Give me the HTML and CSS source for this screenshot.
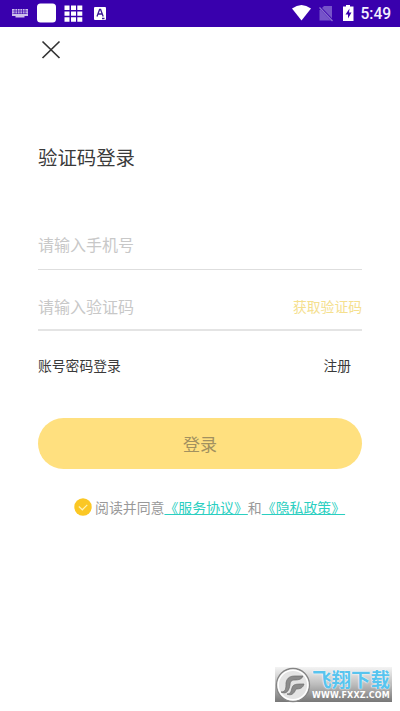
FILE: index.html
```html
<!DOCTYPE html>
<html lang="zh-CN">
<head>
<meta charset="utf-8">
<title>验证码登录</title>
<link rel="stylesheet" href="styles.css">
</head>
<body>
<header class="status">
  <svg class="status-left" width="120" height="26" viewBox="0 0 120 26" fill="#fff">
    <path opacity=".75" d="M12 9h16v7h-3.500v1.500h-9V16H12z"/>
    <path d="M12.500 11h15M12.500 13.300h15M15 9v5M17.500 9v5M20 9v5M22.500 9v5M25 9v5" stroke="#3b00b0" stroke-width=".7"/>
    <rect x="37" y="3.500" width="19" height="19" rx="3.500"/>
    <path d="M64.500 5.500h5v4.600h-5zM71 5.500h5v4.600h-5zM77.300 5.500h5v4.600h-5zM64.500 11.600h5v4.200h-5zM71 11.600h5v4.200h-5zM77.300 11.600h5v4.200h-5zM64.500 17.300h5v4.400h-5zM71 17.300h5v4.400h-5zM77.300 17.300h5v4.400h-5z"/>
    <rect x="94" y="7" width="12" height="13" rx="1"/>
    <path d="M97 16.500l2.600-7h1l2.600 7M98 14h4.200M102 18.500h2.500" fill="none" stroke="#3b1a95" stroke-width="1.300"/>
  </svg>
  <div class="status-right">
    <svg width="64" height="26" viewBox="0 0 64 26">
      <path d="M1 8.500Q10.500 1.500 20 8.500L10.500 20.500z" fill="#fff"/>
      <path d="M33 6h8v14.500H28.500V10.500z" fill="#7654c9"/>
      <path d="M28 6.500l13 13.500" stroke="#3900ad" stroke-width="2.500"/>
      <path d="M28.500 7.500l13 13.500" stroke="#8b6fd0" stroke-width="1.300"/>
      <path d="M55 5h4v1.500h3.500v14.500H52V6.500h3z" fill="#fff"/>
      <path d="M58.500 8.500l-4 6h2.500v4l3.500-6h-2.500z" fill="#3900ad"/>
    </svg>
    <span class="clock">5:49</span>
  </div>
</header>
<main class="page">
  <svg class="close" width="20" height="20" viewBox="0 0 20 20"><path d="M1.500 1.500l17 16.500M18.500 1.500l-17 16.500" fill="none" stroke="#333" stroke-width="1.700"/></svg>
  <h1 class="title">验证码登录</h1>
  <div class="field phone"><span>请输入手机号</span></div>
  <div class="field code"><span>请输入验证码</span><span class="get-code">获取验证码</span></div>
  <nav class="links"><span>账号密码登录</span><span>注册</span></nav>
  <div class="submit">登录</div>
  <div class="agreement">
    <svg width="18" height="18" viewBox="0 0 18 18"><circle cx="9" cy="9" r="8.700" fill="#fbc724"/><path d="M4.800 8.500l3.500 3.300 5-4.900" fill="none" stroke="#fff2b8" stroke-width="1.200"/></svg>
    <p>阅读并同意<a>《服务协议》</a>和<a>《隐私政策》</a></p>
  </div>
</main>
<aside class="watermark">
  <svg class="mark" width="36" height="36" viewBox="0 0 36 36">
    <circle cx="18" cy="18" r="16.500" fill="#e4e4e4" stroke="#858585" stroke-width="1.300"/>
    <circle cx="18" cy="18" r="14.800" fill="none" stroke="#fff" stroke-width="1.400"/>
    <path d="M6 25c5 0 5-4 5-9 1-6 5-7 9-7h8c-1 3-4 4-8 4-4 0-5 2-5 5-1 5-3 10-9 7z" fill="#8b8b8b" stroke="#6b6b6b" stroke-width=".7"/>
    <path d="M12 27c4 0 4-3 5-6 1-4 4-4 12-4-1 4-4 5-8 5-2 5-5 7-9 5z" fill="#8b8b8b" stroke="#6b6b6b" stroke-width=".7"/>
  </svg>
  <div class="mark-text"><strong>飞翔下载</strong><span>WWW.FXXZ.COM</span></div>
</aside>
</body>
</html>
```
FILE: styles.css
```css
* { box-sizing: border-box; }
body {
  margin: 0;
  height: 711px;
  position: relative;
  overflow: hidden;
  background: #fff;
  color: #3a3a3a;
  font-family: "Noto Sans CJK SC", sans-serif;
}
svg { display: block; flex: none; }
.status {
  height: 26.500px;
  background: #3900ad;
  display: flex;
  justify-content: space-between;
}
.status-right { display: flex; padding-right: 9px; gap: 5.500px; }
.clock {
  font: 500 15.600px/29px Roboto, sans-serif;
  color: #f4efff;
  width: 30.500px;
  white-space: nowrap;
}
.page { padding: 13.500px 38px 0; }
.close { margin-left: 3px; }
.title {
  margin: 82px 0 0;
  font-size: 19.400px;
  line-height: 30px;
  font-weight: 400;
}
.field {
  display: flex;
  align-items: center;
  justify-content: space-between;
  font-size: 16px;
  line-height: 24px;
  color: #c8c8c8;
}
.phone {
  margin-top: 60px;
  height: 38px;
  padding-bottom: 13px;
  border-bottom: 1px solid #dedede;
}
.code {
  height: 60.500px;
  padding-top: 14px;
  border-bottom: 2px solid #e4e4e4;
}
.get-code { font-size: 13.800px; color: #f5e08e; }
.links {
  display: flex;
  justify-content: space-between;
  margin-top: 24px;
  padding-right: 11px;
  font-size: 13.800px;
  line-height: 20px;
}
.submit {
  height: 51px;
  margin-top: 43px;
  border-radius: 26px;
  background: #ffe07f;
  color: #a29160;
  font-size: 17px;
  line-height: 51px;
  text-align: center;
}
.agreement {
  display: flex;
  align-items: center;
  gap: 3px;
  margin: 28px 0 0 36px;
  color: #999;
  font-size: 13.900px;
  line-height: 20px;
  white-space: nowrap;
}
.agreement p { margin: 0; }
.agreement a { color: #2bcfc1; text-decoration: underline; text-decoration-thickness: 1px; }
.watermark {
  position: absolute;
  left: 275px;
  top: 667px;
  width: 117px;
  height: 35px;
  display: flex;
  background: linear-gradient(#f4f4f4, #bcbcbc 50%, #777);
}
.mark-text { width: 79px; margin-left: 1px; white-space: nowrap; }
.mark-text strong {
  display: block;
  height: 24px;
  font-size: 19.500px;
  line-height: 23px;
  font-weight: 700;
  color: #58c4ee;
  text-shadow: 0 0 1px #fff, 0 0 2px #fff;
}
.mark-text span {
  display: block;
  font: 700 8px/10px "DejaVu Sans", sans-serif;
  letter-spacing: .15px;
  color: #fff;
}
```
